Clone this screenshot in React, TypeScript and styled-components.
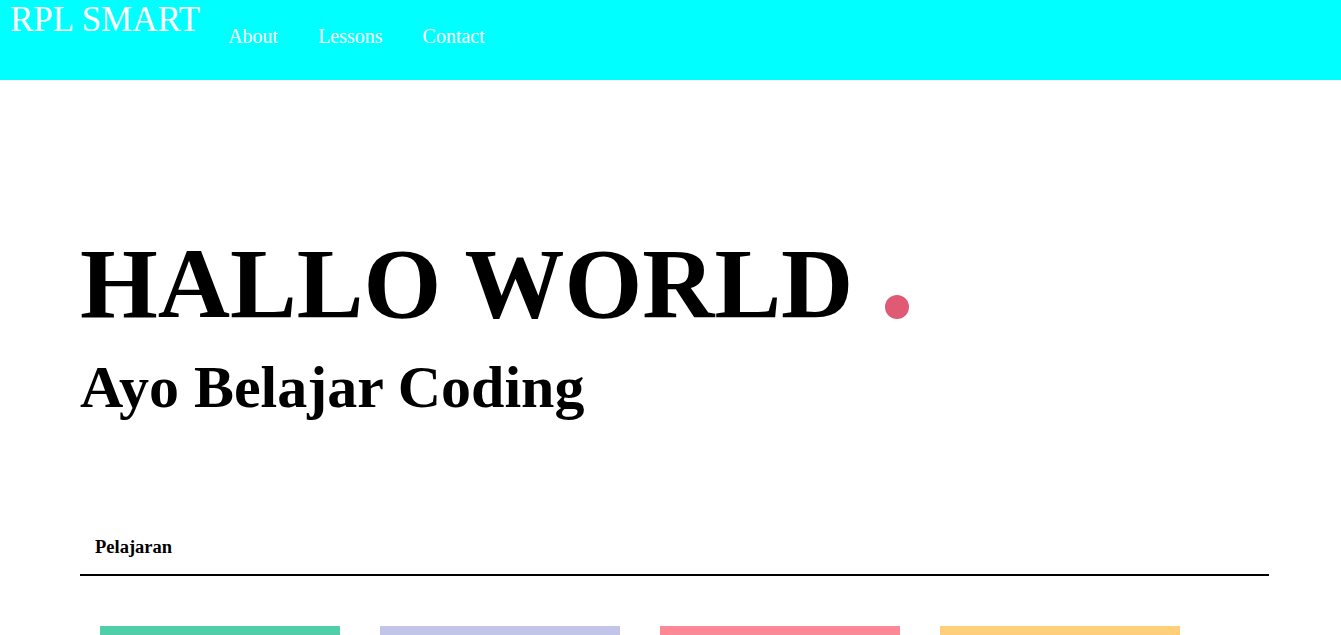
import { FC } from 'react';
import styled, { createGlobalStyle } from 'styled-components';

const GlobalStyle = createGlobalStyle`
	html, body {
		margin: 0;
		padding: 0;
		background: #ffffff;
		font-family: 'Liberation Serif', 'Times New Roman', serif;
		overflow-x: hidden;
	}
	::-webkit-scrollbar {
		display: none;
	}
`;

const lessonColors = ['#4ecfaa', '#c2c4ea', '#ff8896', '#ffcf79'];

const navLinks = ['About', 'Lessons', 'Contact'];

export const App: FC = () => (
	<>
		<GlobalStyle />
		<Header>
			<Logo>RPL SMART</Logo>
			<Nav>
				{navLinks.map((link) => (
					<NavLink key={link} href="#">
						{link}
					</NavLink>
				))}
			</Nav>
		</Header>
		<Main>
			<Hero>
				<Title>
					HALLO WORLD <Dot />
				</Title>
				<Subtitle>Ayo Belajar Coding</Subtitle>
			</Hero>
			<Tabs>
				<Tab>Pelajaran</Tab>
			</Tabs>
			<Cards>
				{lessonColors.map((color) => (
					<Card key={color} $color={color} />
				))}
			</Cards>
		</Main>
	</>
);

const Header = styled.header`
	display: flex;
	align-items: flex-start;
	height: 80px;
	padding: 0 10px;
	background: #00ffff;
	color: #ffffff;
`;

const Logo = styled.div`
	font-size: 35px;
	line-height: 40px;
	white-space: nowrap;
`;

const Nav = styled.nav`
	display: flex;
	margin: 24px 0 0 8px;
`;

const NavLink = styled.a`
	padding: 0 20px;
	font-size: 20px;
	line-height: 24px;
	color: #ffffff;
	text-decoration: none;
`;

const Main = styled.main`
	width: 1189px;
	margin-left: 80px;
`;

const Hero = styled.section`
	padding-top: 152px;
`;

const Title = styled.h1`
	margin: 0;
	font-size: 100px;
	line-height: 104px;
	font-weight: 700;
	color: #000000;
	white-space: nowrap;
`;

const Dot = styled.span`
	display: inline-block;
	width: 24px;
	height: 24px;
	margin-left: 7px;
	margin-bottom: -2px;
	border-radius: 50%;
	background: #e05a74;
`;

const Subtitle = styled.h2`
	margin: 17px 0 0;
	font-size: 60px;
	line-height: 68px;
	font-weight: 700;
	color: #000000;
`;

const Tabs = styled.div`
	display: flex;
	margin-top: 114px;
	padding: 0 15px 15px;
	border-bottom: 2px solid #000000;
`;

const Tab = styled.div`
	font-size: 18.5px;
	line-height: 24px;
	font-weight: 700;
	color: #000000;
`;

const Cards = styled.div`
	display: grid;
	grid-template-columns: repeat(4, 240px);
	gap: 40px;
	margin-top: 50px;
	padding: 0 20px 40px;
`;

const Card = styled.div<{ $color: string }>`
	height: 180px;
	background: ${(props) => props.$color};
`;

export default App;
